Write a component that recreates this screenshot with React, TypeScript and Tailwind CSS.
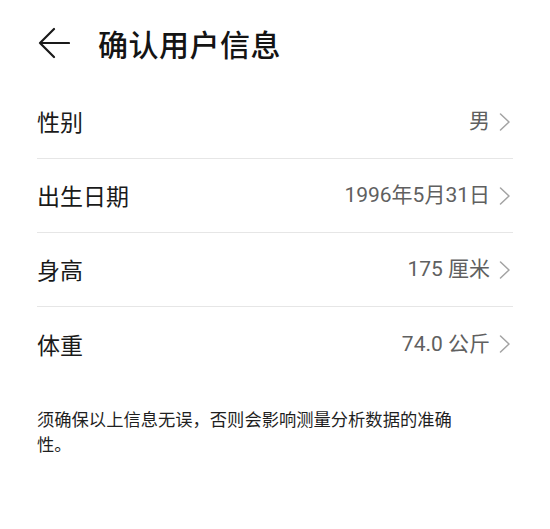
import { useState } from "react";

type Row = { label: string; value: string };

const rows: Row[] = [
  { label: "性别", value: "男" },
  { label: "出生日期", value: "1996年5月31日" },
  { label: "身高", value: "175 厘米" },
  { label: "体重", value: "74.0 公斤" },
];

const Chevron = () => (
  <svg width="13" height="18" viewBox="0 0 13 18" fill="none" className="shrink-0">
    <path d="M2.5 1 L11 9 L2.5 17" stroke="#a3a3a3" strokeWidth="1.5" strokeLinecap="round" strokeLinejoin="round" />
  </svg>
);

const BackArrow = () => (
  <svg width="32" height="32" viewBox="0 0 32 32" fill="none">
    <path d="M31 16 H2 M16 2 L2 16 L16 30" stroke="#1a1a1a" strokeWidth="2.2" strokeLinecap="round" strokeLinejoin="round" />
  </svg>
);

const App = () => {
  const [selected, setSelected] = useState<string | null>(null);

  return (
    <div
      className="w-[550px] h-[529px] bg-white overflow-hidden"
      style={{ fontFamily: '"Noto Sans CJK SC", "Noto Sans", sans-serif' }}
    >
      <header className="h-[85px] flex items-center pl-[38px]">
        <BackArrow />
        <h1 className="ml-[28px] text-[30px] leading-none font-medium text-[#141414] tracking-[0.5px]">
          确认用户信息
        </h1>
      </header>

      <div className="px-[37px]">
        {rows.map((row, i) => (
          <div
            key={row.label}
            onClick={() => setSelected(row.label)}
            className={
              "h-[74px] flex items-center justify-between pr-[2px] " +
              (i < rows.length - 1 ? "border-b border-[#e6e6e6]" : "") +
              (selected === row.label ? " bg-gray-50" : "")
            }
          >
            <span className="text-[23px] leading-none text-[#1a1a1a]">{row.label}</span>
            <div className="flex items-center gap-[8px]">
              <span
                className="text-[21px] leading-none text-[#606060]"
                style={{ fontFamily: 'Roboto, "Noto Sans CJK SC", sans-serif' }}
              >
                {row.value}
              </span>
              <Chevron />
            </div>
          </div>
        ))}
      </div>

      <p className="mt-[25px] pl-[37px] w-[475px] text-[17.3px] leading-[25px] text-[#1f1f1f]">
        须确保以上信息无误，否则会影响测量分析数据的准确性。
      </p>
    </div>
  );
};

export default App;
